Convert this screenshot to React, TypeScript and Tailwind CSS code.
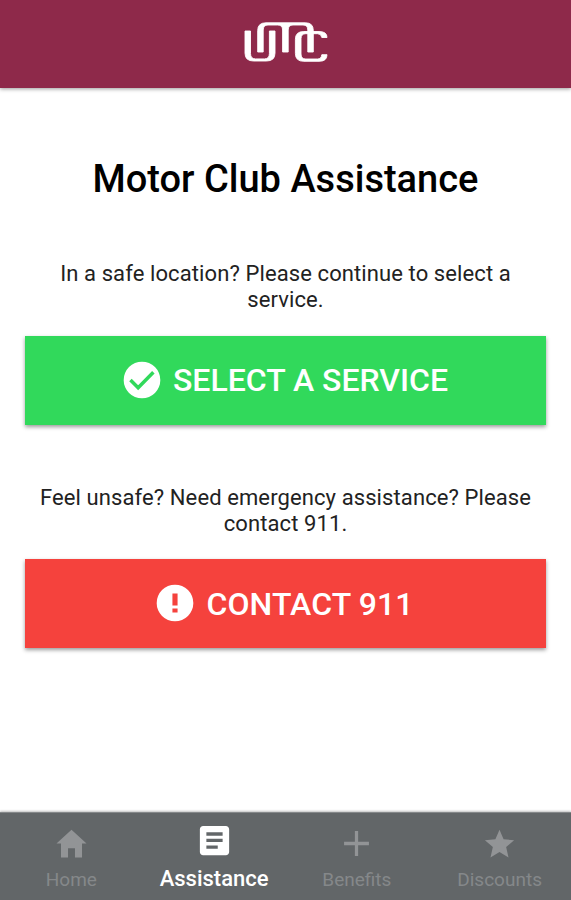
import type { ReactNode } from "react";

function Logo() {
  return (
    <svg
      width="86"
      height="42"
      viewBox="243 21 86 42"
      fill="#fff"
      stroke="#fff"
      strokeWidth="0.9"
      strokeLinejoin="round"
    >
      <path d="M245 31H250.500V53.500Q250.500 58.900 255.500 58.900H264.500Q269.400 58.900 269.400 53.500V31H275V53Q275 61 266.500 61H253.500Q245 61 245 53Z" />
      <path d="M257.700 52V30.500Q257.700 22.800 266 22.800H305.500Q313.300 22.800 313.300 30.500V52H307.800V30Q307.800 25 303 25H293Q288.200 25 288.200 30V52H282.600V30Q282.600 25 277.800 25H268Q263.200 25 263.200 30V52Z" />
      <path d="M327 37.500H321.800Q321.300 33.700 317.500 33.700H305.800Q301 33.700 301 38.700V54Q301 59 305.800 59H317.500Q321.300 59 321.800 54.700H327Q327 61.300 319 61.300H303.800Q295.400 61.300 295.400 53.500V39.300Q295.400 31.500 303.800 31.500H319Q327 31.500 327 37.500Z" />
    </svg>
  );
}

type IconProps = { size: number; box?: number; className?: string; children: ReactNode };

function Icon({ size, box = 24, className = "", children }: IconProps) {
  return (
    <svg
      width={size}
      height={size}
      viewBox={`0 0 ${box} ${box}`}
      fill="currentColor"
      className={`shrink-0 ${className}`}
    >
      {children}
    </svg>
  );
}

const tabs = [
  { label: "Home", icon: <path d="M208 448V320h96v128h97.600V256H464L256 64 48 256h62.400v192z" /> },
  {
    label: "Assistance",
    icon: (
      <path d="M405.300 64H106.700C83.200 64 64 83.200 64 106.700v298.700c0 23.500 19.200 42.700 42.700 42.700h298.700c23.500 0 42.700-19.200 42.700-42.700V106.700C448 83.200 428.800 64 405.300 64zM298.700 362.700H149.300V320h149.300v42.700zm64-85.400H149.300v-42.700h213.300v42.700zm0-85.300H149.300v-42.700h213.300V192z" />
    ),
  },
  {
    label: "Benefits",
    icon: <path d="M428 278.500H278.500V428h-45V278.500H84v-45h149.500V84h45v149.500H428z" />,
  },
  {
    label: "Discounts",
    icon: (
      <path d="M256 372.700L380.800 448l-33-142.100L458 210.400l-145.300-12.500L256 64l-56.700 133.900L54 210.400l110.200 95.500L131.200 448z" />
    ),
  },
];

export default function App() {
  const active = "Assistance";

  return (
    <div className="flex h-[900px] w-[571px] flex-col overflow-hidden bg-white font-[Roboto,sans-serif] text-black">
      <header className="flex h-[88px] shrink-0 justify-center bg-[#8e294a] pt-[21px] shadow-[0_1px_4px_rgba(0,0,0,0.4)]">
        <Logo />
      </header>

      <main className="flex flex-1 flex-col px-[25px] text-center">
        <h1 className="mt-[67px] text-[38px] leading-[48px] font-medium">Motor Club Assistance</h1>

        <p className="mt-[58px] text-[22px] leading-[26px] tracking-[0.1px] text-[#222]">
          In a safe location? Please continue to select a<br />
          service.
        </p>
        <button className="mt-[23px] flex h-[89px] shrink-0 items-center justify-center gap-[9px] bg-[#31d95b] pr-[3px] text-[32px] font-medium text-white shadow-[0_2px_4px_rgba(0,0,0,0.4)]">
          <Icon size={44} className="mb-[2px]">
            <circle cx="12" cy="12" r="10" />
            <path d="M5.700 12L9.900 16.200L18.200 7.800" fill="none" stroke="#31d95b" strokeWidth="1.900" />
          </Icon>
          <span className="mb-[2px]">SELECT A SERVICE</span>
        </button>

        <p className="mt-[60px] text-[22px] leading-[26px] tracking-[0.1px] text-[#222]">
          Feel unsafe? Need emergency assistance? Please
          <br />
          contact 911.
        </p>
        <button className="mt-[22px] flex h-[89px] shrink-0 items-center justify-center gap-[9px] bg-[#f5423d] pr-[4px] text-[32px] font-medium text-white shadow-[0_2px_4px_rgba(0,0,0,0.4)]">
          <Icon size={44} className="mb-[1px]">
            <circle cx="12" cy="12" r="10" />
            <path d="M10.600 6.800h2.800v6.500h-2.800zM10.600 15h2.800v2.200h-2.800z" fill="#f5423d" />
          </Icon>
          <span className="tracking-[0.1px]">CONTACT 911</span>
        </button>
      </main>

      <nav className="flex h-[88px] shrink-0 border-t border-[#85888a] bg-[#626668] shadow-[0_-1px_2px_rgba(0,0,0,0.25)]">
        {tabs.map((tab) => {
          const isActive = tab.label === active;
          return (
            <a
              key={tab.label}
              className={`flex w-1/4 flex-col items-center ${isActive ? "pt-[8px] text-white" : "pt-[12px] text-[#929496]"}`}
            >
              <Icon size={isActive ? 39 : 37} box={512}>
                {tab.icon}
              </Icon>
              <span
                className={
                  isActive
                    ? "mt-[6px] text-[22px] leading-[26px] font-medium"
                    : "mt-[5px] text-[19px] leading-[26px] text-[#85888a]"
                }
              >
                {tab.label}
              </span>
            </a>
          );
        })}
      </nav>
    </div>
  );
}
